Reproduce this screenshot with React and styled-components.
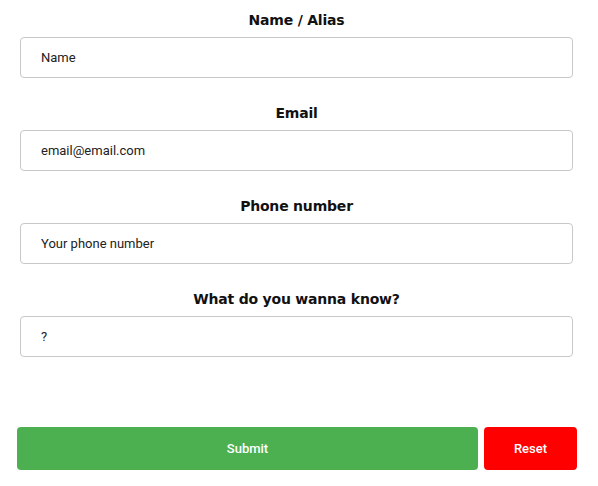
import React from "react";
import styled, { createGlobalStyle } from "styled-components";

const Global = createGlobalStyle`
  html, body { margin: 0; padding: 0; background: #fff; }
  * { box-sizing: border-box; }
`;

const Form = styled.form`
  width: 598px;
  padding: 10px 21px 0 17px;
  display: flex;
  flex-direction: column;
`;

const Field = styled.div`
  display: flex;
  flex-direction: column;
  align-items: stretch;
  padding: 0 3px 0 3px;
  margin-bottom: 25px;
  margin-right: 1px;
`;

const Label = styled.label`
  font-family: "DejaVu Sans", Verdana, sans-serif;
  font-weight: bold;
  font-size: 14px;
  line-height: 20px;
  letter-spacing: -0.2px;
  color: #111;
  text-align: center;
  margin-bottom: 7px;
`;

const Input = styled.input`
  height: 41px;
  width: 100%;
  border: 1px solid #c8c8c8;
  border-radius: 4px;
  padding: 0 20px;
  font-family: Roboto, "Liberation Sans", sans-serif;
  font-size: 13px;
  color: #222;
  outline: none;
  &::placeholder { color: #222; opacity: 1; }
`;

const Buttons = styled.div`
  display: flex;
  gap: 6px;
  margin-top: 45px;
`;

const Button = styled.button`
  height: 43px;
  border: none;
  border-radius: 4px;
  color: #fff;
  font-family: Roboto, "Liberation Sans", sans-serif;
  font-weight: 500;
  font-size: 13px;
  background: ${(p) => p.$bg};
  flex: ${(p) => (p.$grow ? "1" : "0 0 93px")};
  cursor: pointer;
`;

const fields = [
  { label: "Name / Alias", ph: "Name" },
  { label: "Email", ph: "email@email.com" },
  { label: "Phone number", ph: "Your phone number" },
  { label: "What do you wanna know?", ph: "?" },
];

export default function App() {
  return (
    <>
      <Global />
      <Form onSubmit={(e) => e.preventDefault()}>
        {fields.map((f) => (
          <Field key={f.label}>
            <Label>{f.label}</Label>
            <Input placeholder={f.ph} />
          </Field>
        ))}
        <Buttons>
          <Button type="submit" $bg="#4caf50" $grow>Submit</Button>
          <Button type="reset" $bg="#ff0000">Reset</Button>
        </Buttons>
      </Form>
    </>
  );
}
